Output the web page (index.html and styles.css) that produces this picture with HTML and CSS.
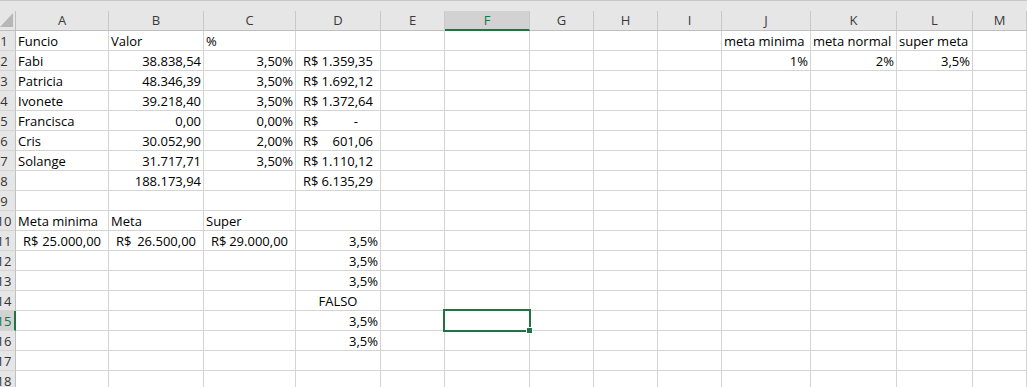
FILE: index.html
```html
<!DOCTYPE html>
<html lang="pt">
<head>
<meta charset="utf-8">
<title>Planilha</title>
<link rel="stylesheet" href="styles.css">
</head>
<body>
<div class="top"></div>
<div class="sheet">
  <div class="h corner"></div><div class="h">A</div><div class="h">B</div><div class="h">C</div><div class="h">D</div><div class="h">E</div><div class="h sel">F</div><div class="h">G</div><div class="h">H</div><div class="h">I</div><div class="h">J</div><div class="h">K</div><div class="h">L</div><div class="h">M</div>

  <div class="rh"><span class="rn">1</span></div><div class="c">Funcio</div><div class="c">Valor</div><div class="c">%</div><div class="c"></div><div class="c"></div><div class="c"></div><div class="c"></div><div class="c"></div><div class="c"></div><div class="c">meta minima</div><div class="c">meta normal</div><div class="c">super meta</div><div class="c"></div>

  <div class="rh"><span class="rn">2</span></div><div class="c">Fabi</div><div class="c r">38.838,54</div><div class="c r">3,50%</div><div class="c acc"><span>R$</span><span>1.359,35</span></div><div class="c"></div><div class="c"></div><div class="c"></div><div class="c"></div><div class="c"></div><div class="c r">1%</div><div class="c r">2%</div><div class="c r">3,5%</div><div class="c"></div>

  <div class="rh"><span class="rn">3</span></div><div class="c">Patricia</div><div class="c r">48.346,39</div><div class="c r">3,50%</div><div class="c acc"><span>R$</span><span>1.692,12</span></div><div class="c"></div><div class="c"></div><div class="c"></div><div class="c"></div><div class="c"></div><div class="c"></div><div class="c"></div><div class="c"></div><div class="c"></div>

  <div class="rh"><span class="rn">4</span></div><div class="c">Ivonete</div><div class="c r">39.218,40</div><div class="c r">3,50%</div><div class="c acc"><span>R$</span><span>1.372,64</span></div><div class="c"></div><div class="c"></div><div class="c"></div><div class="c"></div><div class="c"></div><div class="c"></div><div class="c"></div><div class="c"></div><div class="c"></div>

  <div class="rh"><span class="rn">5</span></div><div class="c">Francisca</div><div class="c r">0,00</div><div class="c r">0,00%</div><div class="c acc"><span>R$</span><span class="dash">-</span></div><div class="c"></div><div class="c"></div><div class="c"></div><div class="c"></div><div class="c"></div><div class="c"></div><div class="c"></div><div class="c"></div><div class="c"></div>

  <div class="rh"><span class="rn">6</span></div><div class="c">Cris</div><div class="c r">30.052,90</div><div class="c r">2,00%</div><div class="c acc"><span>R$</span><span>601,06</span></div><div class="c"></div><div class="c"></div><div class="c"></div><div class="c"></div><div class="c"></div><div class="c"></div><div class="c"></div><div class="c"></div><div class="c"></div>

  <div class="rh"><span class="rn">7</span></div><div class="c">Solange</div><div class="c r">31.717,71</div><div class="c r">3,50%</div><div class="c acc"><span>R$</span><span>1.110,12</span></div><div class="c"></div><div class="c"></div><div class="c"></div><div class="c"></div><div class="c"></div><div class="c"></div><div class="c"></div><div class="c"></div><div class="c"></div>

  <div class="rh"><span class="rn">8</span></div><div class="c"></div><div class="c r">188.173,94</div><div class="c"></div><div class="c acc"><span>R$</span><span>6.135,29</span></div><div class="c"></div><div class="c"></div><div class="c"></div><div class="c"></div><div class="c"></div><div class="c"></div><div class="c"></div><div class="c"></div><div class="c"></div>

  <div class="rh"><span class="rn">9</span></div><div class="c"></div><div class="c"></div><div class="c"></div><div class="c"></div><div class="c"></div><div class="c"></div><div class="c"></div><div class="c"></div><div class="c"></div><div class="c"></div><div class="c"></div><div class="c"></div><div class="c"></div>

  <div class="rh"><span class="rn">10</span></div><div class="c">Meta minima</div><div class="c">Meta</div><div class="c">Super</div><div class="c"></div><div class="c"></div><div class="c"></div><div class="c"></div><div class="c"></div><div class="c"></div><div class="c"></div><div class="c"></div><div class="c"></div><div class="c"></div>

  <div class="rh"><span class="rn">11</span></div><div class="c acc"><span>R$</span><span>25.000,00</span></div><div class="c acc"><span>R$</span><span>26.500,00</span></div><div class="c acc"><span>R$</span><span>29.000,00</span></div><div class="c r">3,5%</div><div class="c"></div><div class="c"></div><div class="c"></div><div class="c"></div><div class="c"></div><div class="c"></div><div class="c"></div><div class="c"></div><div class="c"></div>

  <div class="rh"><span class="rn">12</span></div><div class="c"></div><div class="c"></div><div class="c"></div><div class="c r">3,5%</div><div class="c"></div><div class="c"></div><div class="c"></div><div class="c"></div><div class="c"></div><div class="c"></div><div class="c"></div><div class="c"></div><div class="c"></div>

  <div class="rh"><span class="rn">13</span></div><div class="c"></div><div class="c"></div><div class="c"></div><div class="c r">3,5%</div><div class="c"></div><div class="c"></div><div class="c"></div><div class="c"></div><div class="c"></div><div class="c"></div><div class="c"></div><div class="c"></div><div class="c"></div>

  <div class="rh"><span class="rn">14</span></div><div class="c"></div><div class="c"></div><div class="c"></div><div class="c ctr">FALSO</div><div class="c"></div><div class="c"></div><div class="c"></div><div class="c"></div><div class="c"></div><div class="c"></div><div class="c"></div><div class="c"></div><div class="c"></div>

  <div class="rh sel"><span class="rn">15</span></div><div class="c"></div><div class="c"></div><div class="c"></div><div class="c r">3,5%</div><div class="c"></div><div class="c"></div><div class="c"></div><div class="c"></div><div class="c"></div><div class="c"></div><div class="c"></div><div class="c"></div><div class="c"></div>

  <div class="rh"><span class="rn">16</span></div><div class="c"></div><div class="c"></div><div class="c"></div><div class="c r">3,5%</div><div class="c"></div><div class="c"></div><div class="c"></div><div class="c"></div><div class="c"></div><div class="c"></div><div class="c"></div><div class="c"></div><div class="c"></div>

  <div class="rh"><span class="rn">17</span></div><div class="c"></div><div class="c"></div><div class="c"></div><div class="c"></div><div class="c"></div><div class="c"></div><div class="c"></div><div class="c"></div><div class="c"></div><div class="c"></div><div class="c"></div><div class="c"></div><div class="c"></div>

  <div class="rh"><span class="rn">18</span></div><div class="c"></div><div class="c"></div><div class="c"></div><div class="c"></div><div class="c"></div><div class="c"></div><div class="c"></div><div class="c"></div><div class="c"></div><div class="c"></div><div class="c"></div><div class="c"></div><div class="c"></div>

  <div class="selection"><div class="handle"></div></div>
</div>
</body>
</html>
```

FILE: styles.css
```css
* { box-sizing: border-box; }

html, body {
  margin: 0;
  padding: 0;
  background: #ffffff;
}

body {
  width: 1027px;
  height: 387px;
  overflow: hidden;
  font-family: "Open Sans", "Liberation Sans", sans-serif;
  font-size: 13px;
  color: #000000;
}

.top {
  height: 11px;
  background: #e6e6e6;
  border-top: 1px solid #c6c6c6;
}

.sheet {
  position: relative;
  display: grid;
  grid-template-columns: 16px 93px 95px 92px 85px 64px 85px 64px 64px 64px 89px 86px 76px 1fr;
  grid-auto-rows: 20px;
}

.h {
  background: #e6e6e6;
  border-right: 1px solid #c8c8c8;
  border-bottom: 1px solid #bfbfbf;
  color: #3a3a3a;
  text-align: center;
  line-height: 18px;
  padding-top: 0;
  white-space: nowrap;
}

.h.sel {
  background: #d2d2d2;
  color: #217346;
  border-bottom: 2px solid #217346;
}

.corner {
  position: relative;
  border-right: 1px solid #bfbfbf;
}

.corner::after {
  content: "";
  position: absolute;
  left: 0;
  top: 2px;
  width: 13px;
  height: 14px;
  background: #b7b7b7;
  clip-path: polygon(100% 0, 100% 100%, 0 100%);
}

.rh {
  background: #e6e6e6;
  border-right: 1px solid #bfbfbf;
  border-bottom: 1px solid #d4d4d4;
  color: #333333;
  overflow: hidden;
  line-height: 18px;
  padding-top: 1px;
  white-space: nowrap;
}

.rh.sel {
  background: #d2d2d2;
  color: #217346;
  border-right: 2px solid #217346;
}

.rn {
  display: block;
  width: 30px;
  margin-left: -11px;
  text-align: center;
}

.c {
  border-right: 1px solid #d4d4d4;
  border-bottom: 1px solid #d4d4d4;
  padding: 1px 2px 0 2px;
  line-height: 18px;
  white-space: nowrap;
  overflow: hidden;
}

.r { text-align: right; }

.ctr { text-align: center; }

.acc {
  display: flex;
  justify-content: space-between;
  padding-left: 7px;
  padding-right: 7px;
}

.dash { margin-right: 15px; }

.selection {
  position: absolute;
  left: 443px;
  top: 298px;
  width: 88px;
  height: 23px;
  border: 2px solid #217346;
  pointer-events: none;
}

.handle {
  position: absolute;
  left: 81px;
  top: 16px;
  width: 7px;
  height: 7px;
  background: #217346;
  border: 1px solid #ffffff;
}
```
